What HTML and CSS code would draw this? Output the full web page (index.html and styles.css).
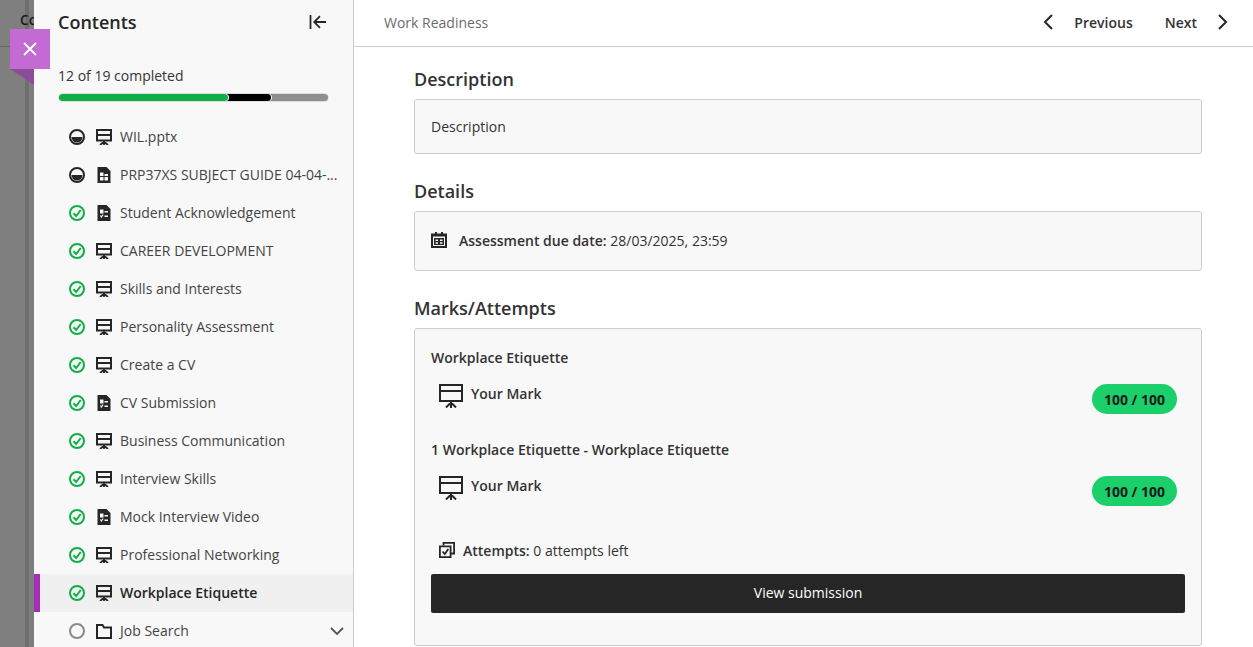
FILE: index.html
```html
<!DOCTYPE html>
<html lang="en">

<head>
    <meta charset="UTF-8">
    <meta name="viewport" content="width=device-width, initial-scale=1.0">
    <title>Work Readiness</title>
    <link rel="stylesheet" href="styles.css">
</head>

<body>
    <svg class="defs" width="0" height="0">
        <symbol id="i-slides" viewBox="0 0 16 16">
            <path d="M0 0h16v12.500H0z M2 2v3h12V2z M2 7v3.500h12V7z" fill-rule="evenodd" fill="currentColor"/>
            <path d="M8 12v4 M8 12.800 4 16 M8 12.800 12 16" stroke="currentColor" stroke-width="1.800" fill="none"/>
        </symbol>
        <symbol id="i-doc" viewBox="0 0 16 16">
            <path d="M1.500 0h9l4 4v12h-13z M4 5.500V9h3.500V5.500z M4 10v3.500h3.500V10z M8.500 7v2H12V7z M8.500 10v3.500H12V10z" fill-rule="evenodd" fill="currentColor"/>
        </symbol>
        <symbol id="i-form" viewBox="0 0 16 16">
            <path d="M1.500 0h9l4 4v12h-13z M4 4.500V8.500h3.500V4.500z M8.500 6v1.500H12V6z M8.500 10.500V12H12v-1.500z M4 10.500l1.200 2.800 2.300-3.300-1 -.7-1.400 2-.6-1.300z" fill-rule="evenodd" fill="currentColor"/>
        </symbol>
        <symbol id="i-half" viewBox="0 0 16 16">
            <circle cx="8" cy="8" r="7" fill="none" stroke="currentColor" stroke-width="2"/>
            <path d="M2.500 8h11a5.500 5.500 0 0 1-11 0z" fill="currentColor"/>
        </symbol>
        <symbol id="i-done" viewBox="0 0 16 16">
            <circle cx="8" cy="8" r="7" fill="none" stroke="currentColor" stroke-width="2"/>
            <path d="M4.500 8.200 7.200 11 11.700 5" fill="none" stroke="currentColor" stroke-width="2"/>
        </symbol>
        <symbol id="i-screen" viewBox="0 0 24 24">
            <path d="M1 1h22v16H1z M1 7h22" fill="none" stroke="currentColor" stroke-width="2"/>
            <path d="M12 17v7 M12 18.500l-5 5 M12 18.500l5 5" fill="none" stroke="currentColor" stroke-width="2"/>
        </symbol>
    </svg>

    <aside class="backdrop">
        <span class="backdrop-text">Co</span>
        <div class="backdrop-line"></div>
    </aside>

    <button class="close-flag" aria-label="Close">
        <svg width="16" height="16" viewBox="0 0 16 16">
            <path d="M2 2 14 14 M14 2 2 14" stroke="#fff" stroke-width="1.800" fill="none"/>
        </svg>
    </button>

    <nav class="sidebar">
        <div class="sidebar-head">
            <h2>Contents</h2>
            <svg class="collapse" width="18" height="14" viewBox="0 0 18 14">
                <path d="M1.500 0v14 M17 7H5.500 M11 1.200 5.200 7l5.800 5.800" stroke="#262626" stroke-width="1.800" fill="none"/>
            </svg>
        </div>
        <p class="progress-label">12 of 19 completed</p>
        <div class="progress">
            <span class="seg seg-done"></span>
            <span class="seg seg-part"></span>
            <span class="seg seg-rest"></span>
        </div>
        <ul class="toc">
            <li><svg class="status"><use href="#i-half"/></svg><svg class="type"><use href="#i-slides"/></svg><span>WIL.pptx</span></li>
            <li><svg class="status"><use href="#i-half"/></svg><svg class="type"><use href="#i-doc"/></svg><span>PRP37XS SUBJECT GUIDE 04-04-...</span></li>
            <li><svg class="status ok"><use href="#i-done"/></svg><svg class="type"><use href="#i-form"/></svg><span>Student Acknowledgement</span></li>
            <li><svg class="status ok"><use href="#i-done"/></svg><svg class="type"><use href="#i-slides"/></svg><span>CAREER DEVELOPMENT</span></li>
            <li><svg class="status ok"><use href="#i-done"/></svg><svg class="type"><use href="#i-slides"/></svg><span>Skills and Interests</span></li>
            <li><svg class="status ok"><use href="#i-done"/></svg><svg class="type"><use href="#i-slides"/></svg><span>Personality Assessment</span></li>
            <li><svg class="status ok"><use href="#i-done"/></svg><svg class="type"><use href="#i-slides"/></svg><span>Create a CV</span></li>
            <li><svg class="status ok"><use href="#i-done"/></svg><svg class="type"><use href="#i-form"/></svg><span>CV Submission</span></li>
            <li><svg class="status ok"><use href="#i-done"/></svg><svg class="type"><use href="#i-slides"/></svg><span>Business Communication</span></li>
            <li><svg class="status ok"><use href="#i-done"/></svg><svg class="type"><use href="#i-slides"/></svg><span>Interview Skills</span></li>
            <li><svg class="status ok"><use href="#i-done"/></svg><svg class="type"><use href="#i-form"/></svg><span>Mock Interview Video</span></li>
            <li><svg class="status ok"><use href="#i-done"/></svg><svg class="type"><use href="#i-slides"/></svg><span>Professional Networking</span></li>
            <li class="active"><svg class="status ok"><use href="#i-done"/></svg><svg class="type"><use href="#i-slides"/></svg><span>Workplace Etiquette</span></li>
            <li>
                <svg class="status todo" viewBox="0 0 16 16"><circle cx="8" cy="8" r="7" fill="none" stroke="currentColor" stroke-width="2"/></svg>
                <svg class="type" viewBox="0 0 16 16"><path d="M1 2h5.500l1.500 2.500h7V15H1z" fill="none" stroke="currentColor" stroke-width="2"/></svg>
                <span>Job Search</span>
                <svg class="chevron" width="14" height="8" viewBox="0 0 14 8"><path d="M1 1l6 6 6-6" fill="none" stroke="#555" stroke-width="1.800"/></svg>
            </li>
        </ul>
    </nav>

    <main class="main">
        <header class="topbar">
            <span class="crumb">Work Readiness</span>
            <div class="pager">
                <svg width="10" height="16" viewBox="0 0 10 16"><path d="M9 1 2 8l7 7" fill="none" stroke="#262626" stroke-width="2"/></svg>
                <span class="pager-prev">Previous</span>
                <span class="pager-next">Next</span>
                <svg width="10" height="16" viewBox="0 0 10 16"><path d="M1 1l7 7-7 7" fill="none" stroke="#262626" stroke-width="2"/></svg>
            </div>
        </header>

        <div class="content">
            <h3>Description</h3>
            <section class="box box-desc">Description</section>

            <h3>Details</h3>
            <section class="box box-due">
                <svg width="16" height="16" viewBox="0 0 16 16">
                    <path d="M4 0h2v1.500h4V0h2v1.500h4V16H0V1.500h4z M2 4.500V14h12V4.500z" fill-rule="evenodd" fill="#262626"/>
                    <path d="M3 6h10v7H3z M4.500 7.500V9H7V7.500z M9 7.500V9h2.500V7.500z M4.500 10.200v1.500H7v-1.500z M9 10.200v1.500h2.500v-1.500z" fill-rule="evenodd" fill="#262626"/>
                </svg>
                <span><b>Assessment due date:</b> 28/03/2025, 23:59</span>
            </section>

            <h3>Marks/Attempts</h3>
            <section class="box box-marks">
                <h4>Workplace Etiquette</h4>
                <div class="mark-row">
                    <svg class="mark-icon"><use href="#i-screen"/></svg>
                    <span class="mark-label">Your Mark</span>
                    <span class="pill">100 / 100</span>
                </div>
                <h4 class="second">1 Workplace Etiquette - Workplace Etiquette</h4>
                <div class="mark-row">
                    <svg class="mark-icon"><use href="#i-screen"/></svg>
                    <span class="mark-label">Your Mark</span>
                    <span class="pill">100 / 100</span>
                </div>
                <div class="attempts">
                    <svg width="16" height="16" viewBox="0 0 16 16">
                        <path d="M4.500 3.500V.9h10.600v10.600h-3" fill="none" stroke="#262626" stroke-width="1.800"/>
                        <path d="M.9 4.400h10.700v10.700H.9z" fill="none" stroke="#262626" stroke-width="1.800"/>
                        <path d="M3.500 9.500 5.800 12l3.500-5" fill="none" stroke="#262626" stroke-width="1.800"/>
                    </svg>
                    <span><b>Attempts:</b> 0 attempts left</span>
                </div>
                <button class="view-btn">View submission</button>
            </section>
        </div>
    </main>
</body>

</html>
```

FILE: styles.css
```css
* {
    box-sizing: border-box;
}

html,
body {
    margin: 0;
    height: 100%;
    overflow: hidden;
}

body {
    display: flex;
    font-family: 'Open Sans', 'Noto Sans', sans-serif;
    font-size: 14px;
    color: #262626;
    background-color: #fff;
}

h2,
h3,
h4,
p,
ul {
    margin: 0;
    padding: 0;
}

b {
    font-weight: 600;
}

.defs {
    position: absolute;
}

.backdrop {
    width: 34px;
    flex: none;
    overflow: hidden;
    position: relative;
    background: linear-gradient(to right, #7f7f7f 25px, #6f6f6f 25px, #6f6f6f 29px, #7d7d7d 29px);
}

.backdrop-text {
    display: block;
    margin: 10px 0 0 20px;
    font-weight: 600;
    color: #1a1a1a;
}

.backdrop-line {
    position: absolute;
    left: 0;
    right: 0;
    top: 46px;
    height: 1px;
    background-color: #666;
}

.close-flag {
    position: absolute;
    left: 10px;
    top: 29px;
    width: 40px;
    height: 40px;
    padding: 0;
    border: none;
    background-color: #c36bd2;
    display: flex;
    align-items: center;
    justify-content: center;
    z-index: 1;
}

.close-flag::after {
    content: '';
    position: absolute;
    left: 0;
    top: 40px;
    width: 24px;
    height: 16px;
    background-color: #8d4c99;
    clip-path: polygon(0 0, 100% 0, 100% 100%);
}

.sidebar {
    width: 320px;
    flex: none;
    height: 647px;
    overflow: hidden;
    background-color: #f8f8f8;
    border-right: 1px solid #cdcdcd;
}

.sidebar-head {
    display: flex;
    align-items: center;
    justify-content: space-between;
    padding: 8px 26px 0 24px;
    height: 36px;
    position: relative;
    z-index: 2;
}

.sidebar-head h2 {
    font-size: 18px;
    font-weight: 600;
    line-height: 26px;
}

.progress-label {
    margin: 30px 0 0 24px;
    line-height: 20px;
    color: #333;
}

.progress {
    display: flex;
    margin: 7px 0 0 24px;
    width: 271px;
    height: 9px;
    border: 1px solid #ddd;
    border-radius: 5px;
    overflow: hidden;
}

.seg {
    display: block;
    height: 100%;
}

.seg-done {
    width: 169px;
    background-color: #0fae47;
    border-radius: 0 4px 4px 0;
    position: relative;
    z-index: 2;
    box-shadow: 1px 0 0 #fff;
}

.seg-part {
    width: 44px;
    margin-left: -1px;
    padding-left: 1px;
    background-color: #000;
    border-radius: 0 4px 4px 0;
    position: relative;
    z-index: 1;
    box-shadow: 1px 0 0 #fff;
}

.seg-rest {
    flex: 1;
    margin-left: -4px;
    background-color: #8f8f8f;
}

.toc {
    list-style: none;
    margin-top: 16px;
}

.toc li {
    display: flex;
    align-items: center;
    height: 38px;
    padding-left: 35px;
    color: #444;
    position: relative;
}

.toc li span {
    margin-bottom: 2px;
}

.toc li.active {
    background-color: #f0f0f0;
    font-weight: 600;
    color: #262626;
}

.toc li.active::before {
    content: '';
    position: absolute;
    left: 0;
    top: 0;
    bottom: 0;
    width: 6px;
    background-color: #a72db5;
}

.status {
    width: 16px;
    height: 16px;
    color: #262626;
    flex: none;
}

.status.ok {
    color: #0fae47;
}

.status.todo {
    color: #8a8a8a;
}

.type {
    width: 16px;
    height: 16px;
    margin-left: 11px;
    margin-right: 8px;
    color: #262626;
    flex: none;
}

.chevron {
    position: absolute;
    right: 9px;
    top: 15px;
}

.main {
    flex: 1;
    min-width: 0;
}

.topbar {
    display: flex;
    align-items: center;
    justify-content: space-between;
    height: 47px;
    padding: 0 25px 2px 30px;
    border-bottom: 1px solid #cdcdcd;
}

.crumb {
    color: #6b6b6b;
}

.pager {
    display: flex;
    align-items: center;
    font-weight: 600;
    color: #333;
}

.pager-prev {
    margin-left: 21px;
}

.pager-next {
    margin-left: 32px;
    margin-right: 21px;
}

.content {
    padding: 19px 51px 0 60px;
}

.content h3 {
    font-size: 18px;
    font-weight: 600;
    line-height: 26px;
    margin-bottom: 7px;
    color: #333;
}

.box {
    background-color: #f8f8f8;
    border: 1px solid #cdcdcd;
    border-radius: 3px;
    padding: 0 16px;
    margin-bottom: 24px;
}

.box-desc {
    height: 55px;
    display: flex;
    align-items: center;
    color: #333;
}

.box-due {
    height: 60px;
    display: flex;
    align-items: center;
    gap: 12px;
    color: #333;
    padding-bottom: 2px;
}

.box-marks {
    height: 318px;
    padding-top: 19px;
    margin-bottom: 0;
}

.box-marks h4 {
    font-size: 14px;
    font-weight: 600;
    line-height: 20px;
    color: #333;
}

.box-marks h4.second {
    margin-top: 26px;
}

.mark-row {
    display: flex;
    align-items: flex-start;
    margin-top: 16px;
    padding: 0 8px;
    height: 30px;
}

.mark-icon {
    width: 24px;
    height: 24px;
    flex: none;
    color: #262626;
}

.mark-label {
    margin-left: 8px;
    font-weight: 600;
    line-height: 20px;
    color: #333;
    flex: 1;
}

.pill {
    width: 85px;
    height: 30px;
    border-radius: 15px;
    background-color: #1bcf6a;
    font-weight: 700;
    color: #1a1a1a;
    line-height: 31px;
    text-align: center;
}

.attempts {
    display: flex;
    align-items: center;
    gap: 8px;
    margin-top: 34px;
    padding-left: 8px;
    color: #333;
    height: 20px;
}

.view-btn {
    display: block;
    width: 100%;
    height: 39px;
    margin-top: 14px;
    padding: 0 0 2px;
    border: none;
    border-radius: 2px;
    background-color: #262626;
    color: #fff;
    font-family: inherit;
    font-size: 14px;
}
```
